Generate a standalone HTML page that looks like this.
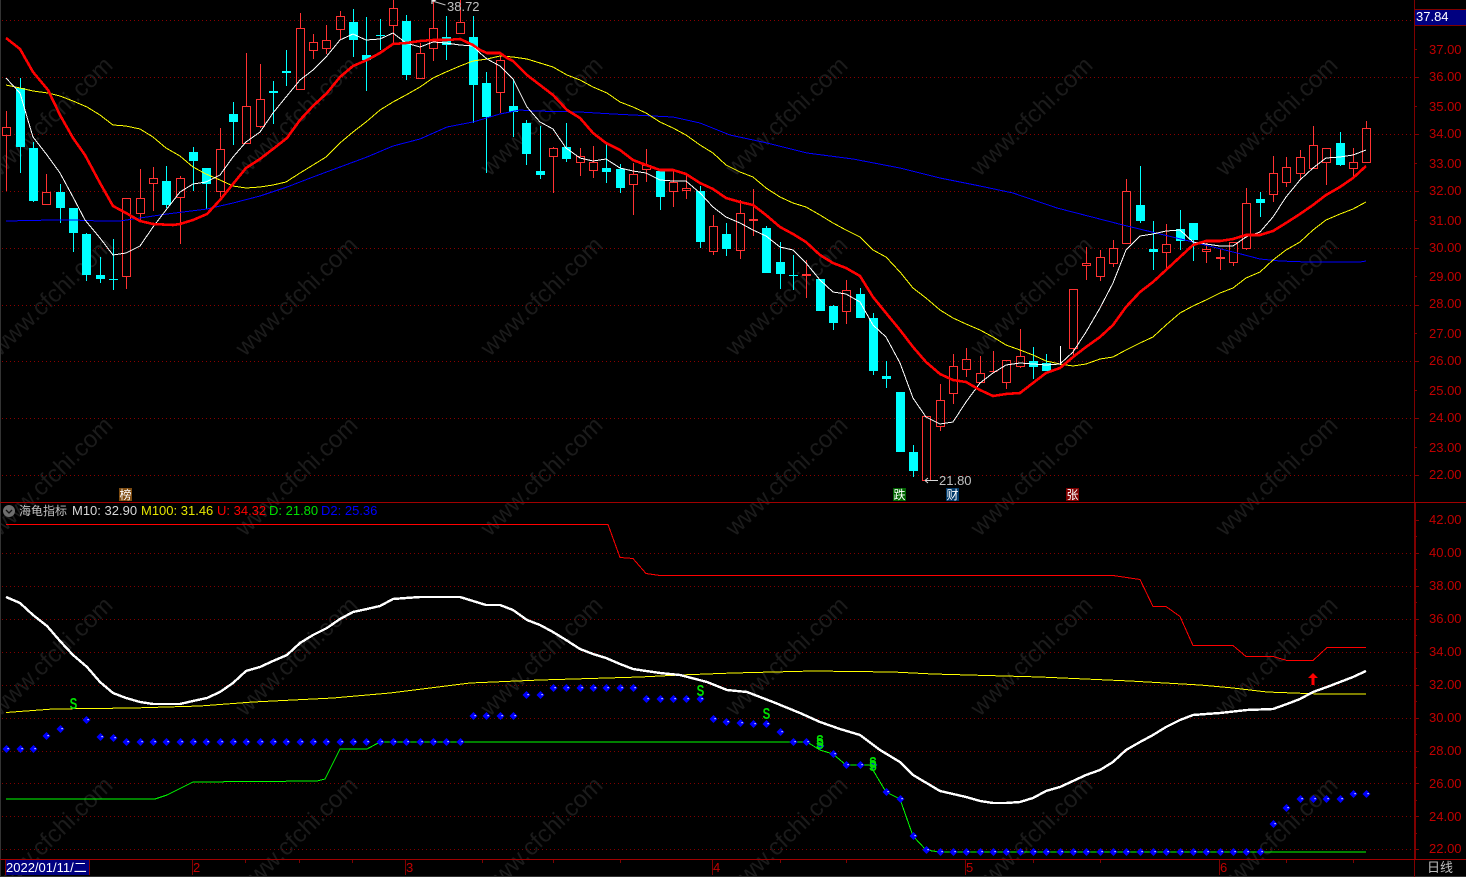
<!DOCTYPE html>
<html><head><meta charset="utf-8"><title>海龟指标</title>
<style>
html,body{margin:0;padding:0;background:#000;width:1466px;height:877px;overflow:hidden}
svg{display:block}
text{font-family:"Liberation Sans","Noto Sans CJK SC",sans-serif;font-size:13px}
.ax text{fill:#c00000}
.wm text{fill:#1b1b1b;font-size:24px;text-anchor:middle}
.tag{fill:#fff;font-size:12px;text-anchor:middle}
.s{fill:#00e000;font-size:16px;font-weight:bold;text-anchor:middle}
</style></head><body>
<svg width="1466" height="877" viewBox="0 0 1466 877" xmlns="http://www.w3.org/2000/svg">
<defs><g id="d"><path d="M0-4l4 4-4 4-4-4z" fill="#0000ff"/><path d="M1-1h1.2v1.2h-1.2z" fill="#fff"/></g></defs>
<rect width="1466" height="877" fill="#000"/>
<g class="wm">
<text transform="translate(57 122) rotate(-44)">www.cfchi.com</text><text transform="translate(302 122) rotate(-44)">www.cfchi.com</text><text transform="translate(547 122) rotate(-44)">www.cfchi.com</text><text transform="translate(792 122) rotate(-44)">www.cfchi.com</text><text transform="translate(1037 122) rotate(-44)">www.cfchi.com</text><text transform="translate(1282 122) rotate(-44)">www.cfchi.com</text>
<text transform="translate(57 302) rotate(-44)">www.cfchi.com</text><text transform="translate(302 302) rotate(-44)">www.cfchi.com</text><text transform="translate(547 302) rotate(-44)">www.cfchi.com</text><text transform="translate(792 302) rotate(-44)">www.cfchi.com</text><text transform="translate(1037 302) rotate(-44)">www.cfchi.com</text><text transform="translate(1282 302) rotate(-44)">www.cfchi.com</text>
<text transform="translate(57 482) rotate(-44)">www.cfchi.com</text><text transform="translate(302 482) rotate(-44)">www.cfchi.com</text><text transform="translate(547 482) rotate(-44)">www.cfchi.com</text><text transform="translate(792 482) rotate(-44)">www.cfchi.com</text><text transform="translate(1037 482) rotate(-44)">www.cfchi.com</text><text transform="translate(1282 482) rotate(-44)">www.cfchi.com</text>
<text transform="translate(57 662) rotate(-44)">www.cfchi.com</text><text transform="translate(302 662) rotate(-44)">www.cfchi.com</text><text transform="translate(547 662) rotate(-44)">www.cfchi.com</text><text transform="translate(792 662) rotate(-44)">www.cfchi.com</text><text transform="translate(1037 662) rotate(-44)">www.cfchi.com</text><text transform="translate(1282 662) rotate(-44)">www.cfchi.com</text>
<text transform="translate(57 842) rotate(-44)">www.cfchi.com</text><text transform="translate(302 842) rotate(-44)">www.cfchi.com</text><text transform="translate(547 842) rotate(-44)">www.cfchi.com</text><text transform="translate(792 842) rotate(-44)">www.cfchi.com</text><text transform="translate(1037 842) rotate(-44)">www.cfchi.com</text><text transform="translate(1282 842) rotate(-44)">www.cfchi.com</text>
</g>
<g shape-rendering="crispEdges" fill="none">
<path stroke="#8a0000" stroke-dasharray="1 3" d="M2 20.5H1414M2 77.5H1414M2 134.5H1414M2 191.5H1414M2 248.5H1414M2 305.5H1414M2 361.5H1414M2 418.5H1414M2 475.5H1414"/>
<path stroke="#800000" stroke-dasharray="1 3" d="M2 553.5H1414M2 586.5H1414M2 619.5H1414M2 652.5H1414M2 685.5H1414M2 718.5H1414M2 751.5H1414M2 783.5H1414M2 816.5H1414M2 849.5H1414"/>
<rect x="0" y="0" width="1" height="877" fill="#333"/>
<path stroke="#333" d="M0 876.5H1466"/>
<path stroke="#800000" d="M1414.5 0V877"/>
<path stroke="#a00000" d="M0 502.5H1466M0 859.5H1466"/>
<path stroke="#800000" d="M1415.5 503V859"/>
<path stroke="#800000" d="M1414 20.5h5M1414 49.5h3M1414 77.5h5M1414 106.5h3M1414 134.5h5M1414 163.5h3M1414 191.5h5M1414 220.5h3M1414 248.5h5M1414 276.5h3M1414 305.5h5M1414 333.5h3M1414 361.5h5M1414 390.5h3M1414 418.5h5M1414 447.5h3M1414 475.5h5"/>
<path stroke="#800000" d="M1414 520.5h5M1414 536.5h3M1414 553.5h5M1414 569.5h3M1414 586.5h5M1414 602.5h3M1414 619.5h5M1414 635.5h3M1414 652.5h5M1414 668.5h3M1414 685.5h5M1414 701.5h3M1414 718.5h5M1414 734.5h3M1414 751.5h5M1414 767.5h3M1414 783.5h5M1414 800.5h3M1414 816.5h5M1414 833.5h3M1414 849.5h5"/>
<path stroke="#800000" d="M192.500 860v15M405.500 860v15M712.500 860v15M965.500 860v15M1219.500 860v15M5.500 860v15M89.500 860v15M245.500 860v3M299.500 860v3M352.500 860v3M482.500 860v3M553.500 860v3M620.500 860v3M780.500 860v3M846.500 860v3M1033.500 860v3M1100.500 860v3M1286.500 860v3M1353.500 860v3"/>
</g>
<g shape-rendering="crispEdges">
<path fill="none" stroke="#00ffff" d="M20.5 78V173M33.5 142V202M60.5 184V223M73.5 208V252M86.5 233V281M100.5 257V283M113.5 239V290M166.5 166V208M193.5 147V191M206.5 168V209M233.5 102V145M273.5 81V124M286.5 50V86M353.5 9V57M366.5 17V91M380.5 19V50M406.5 15V80M446.5 16V60M473.5 16V123M486.5 72V173M513.5 79V137M526.5 120V165M540.5 126V179M566.5 123V162M606.5 143V183M620.5 164V193M660.5 171V210M700.5 186V248M726.5 223V256M766.5 226V273M780.5 242V289M793.5 255V290M833.5 305V330M860.5 288V318M873.5 313V375M886.5 361V388M913.5 445V477M1033.5 347V379M1046.5 354V371M1140.5 166V223M1153.5 221V270M1180.5 210V250M1193.5 223V261M1260.5 192V217M1340.5 132V166"/>
<path fill="#00ffff" d="M16 88h9v59h-9zM29 148h9v53h-9zM56 192h9v16h-9zM69 208h9v25h-9zM82 234h9v41h-9zM96 275h9v4h-9zM109 279h9v1h-9zM162 181h9v24h-9zM189 152h9v9h-9zM202 168h9v16h-9zM229 114h9v8h-9zM269 91h9v2h-9zM282 71h9v2h-9zM349 22h9v18h-9zM362 55h9v5h-9zM376 35h9v1h-9zM402 21h9v54h-9zM442 37h9v8h-9zM469 37h9v48h-9zM482 83h9v34h-9zM509 106h9v6h-9zM522 123h9v31h-9zM536 171h9v4h-9zM562 147h9v12h-9zM602 168h9v4h-9zM616 169h9v19h-9zM656 171h9v26h-9zM696 191h9v51h-9zM722 234h9v15h-9zM762 228h9v45h-9zM776 262h9v12h-9zM789 275h9v1h-9zM816 279h9v32h-9zM829 306h9v17h-9zM856 294h9v24h-9zM869 318h9v53h-9zM882 376h9v3h-9zM896 392h9v60h-9zM909 452h9v19h-9zM1029 361h9v6h-9zM1042 363h9v8h-9zM1136 205h9v16h-9zM1149 249h9v3h-9zM1176 229h9v12h-9zM1189 223h9v17h-9zM1256 199h9v4h-9zM1336 143h9v22h-9z"/>
<path fill="none" stroke="#ff3232" d="M6.5 111V127M6.5 135V191M46.5 174V192M46.5 204V205M126.5 276V289M140.5 169V198M140.5 213V220M153.5 167V178M153.5 183V211M180.5 176V178M180.5 197V244M220.5 128V149M220.5 191V197M246.5 53V106M260.5 64V99M260.5 126V128M300.5 13V28M300.5 89V90M313.5 34V42M313.5 50V59M326.5 25V40M326.5 48V54M340.5 11V16M340.5 29V40M393.5 0V8M393.5 25V43M420.5 43V53M433.5 0V28M433.5 48V61M460.5 0V22M500.5 56V60M500.5 92V113M553.5 147V148M553.5 156V193M580.5 148V156M580.5 162V176M593.5 146V162M593.5 170V178M633.5 163V174M633.5 184V215M646.5 149V165M646.5 169V182M673.5 171V182M673.5 191V207M686.5 174V188M686.5 190V199M713.5 215V226M713.5 251V255M740.5 200V213M740.5 250V259M753.5 189V236M806.5 260V298M846.5 280V290M846.5 311V324M940.5 384V400M940.5 426V431M953.5 354V366M953.5 393V404M966.5 348V359M966.5 369V377M980.5 356V373M993.5 351V373M1006.5 382V389M1020.5 329V356M1020.5 366V368M1073.5 348V355M1086.5 247V263M1086.5 265V280M1100.5 250V257M1100.5 276V281M1113.5 240V248M1113.5 263V267M1126.5 179V191M1166.5 224V244M1166.5 252V268M1206.5 243V249M1206.5 251V263M1220.5 249V270M1233.5 262V266M1246.5 188V203M1246.5 248V250M1273.5 156V173M1273.5 194V202M1286.5 157V167M1286.5 182V187M1300.5 150V157M1300.5 173V179M1313.5 126V145M1326.5 162V185M1353.5 148V162M1353.5 168V177M1366.5 121V128"/>
<path fill="none" stroke="#ff3232" d="M2.5 127.5h8v8h-8zM42.5 192.5h8v12h-8zM122.5 198.5h8v78h-8zM136.5 198.5h8v15h-8zM149.5 178.5h8v5h-8zM176.5 178.5h8v19h-8zM216.5 149.5h8v42h-8zM242.5 106.5h8v37h-8zM256.5 99.5h8v27h-8zM296.5 28.5h8v61h-8zM309.5 42.5h8v8h-8zM322.5 40.5h8v8h-8zM336.5 16.5h8v13h-8zM389.5 8.5h8v17h-8zM416.5 53.5h8v25h-8zM429.5 28.5h8v20h-8zM456.5 22.5h8v11h-8zM496.5 60.5h8v32h-8zM549.5 148.5h8v8h-8zM576.5 156.5h8v6h-8zM589.5 162.5h8v8h-8zM629.5 174.5h8v10h-8zM642.5 165.5h8v4h-8zM669.5 182.5h8v9h-8zM682.5 188.5h8v2h-8zM709.5 226.5h8v25h-8zM736.5 213.5h8v37h-8zM749.5 219.5h8v1h-8zM802.5 274.5h8v1h-8zM842.5 290.5h8v21h-8zM922.5 416.5h8v64h-8zM936.5 400.5h8v26h-8zM949.5 366.5h8v27h-8zM962.5 359.5h8v10h-8zM976.5 373.5h8v9h-8zM989.5 371.5h8M1002.5 360.5h8v22h-8zM1016.5 356.5h8v10h-8zM1069.5 289.5h8v59h-8zM1082.5 263.5h8v2h-8zM1096.5 257.5h8v19h-8zM1109.5 248.5h8v15h-8zM1122.5 191.5h8v52h-8zM1162.5 244.5h8v8h-8zM1202.5 249.5h8v2h-8zM1216.5 257.5h8v1h-8zM1229.5 242.5h8v20h-8zM1242.5 203.5h8v45h-8zM1269.5 173.5h8v21h-8zM1282.5 167.5h8v15h-8zM1296.5 157.5h8v16h-8zM1309.5 145.5h8v23h-8zM1322.5 148.5h8v14h-8zM1349.5 162.5h8v6h-8zM1362.5 128.5h8v34h-8z"/>
<path fill="none" stroke="#fff" d="M1060.5 346V365"/>
</g>
<g fill="none" stroke-linejoin="round" shape-rendering="crispEdges">
<polyline stroke="#0000ff" stroke-width="1" points="6,221 53,220 73,220 100,221 120,221 140,218 167,214 207,209 233,203 260,196 287,187 313,177 340,167 367,157 393,146 420,139 447,127 473,122 490,117 500,114 520,110 533,111 580,112 613,114 673,117 700,123 730,135 767,143 807,153 853,159 900,168 940,178 980,186 1013,193 1057,208 1123,225 1193,242 1237,253 1260,259 1280,261 1307,262 1360,262 1366,261"/>
<polyline stroke="#ffff00" stroke-width="1" points="6,85 20,88 33,91 48,93 60,96 73,101 87,107 100,115 113,125 126,126 140,129 153,137 166,148 180,156 193,167 206,174 220,180 233,186 246,188 260,187 273,185 286,182 300,173 313,165 326,157 340,143 353,132 366,122 380,110 393,102 406,95 420,87 433,78 446,72 460,66 473,61 487,59 500,56 513,57 527,59 540,63 553,67 567,75 580,80 593,87 607,93 620,102 633,107 646,113 660,122 673,128 686,135 700,145 713,153 726,165 740,172 753,177 766,188 780,197 793,203 806,207 820,215 833,223 846,230 860,237 873,250 886,257 900,272 913,288 926,298 940,310 953,318 966,324 980,330 993,337 1006,345 1020,350 1033,355 1046,361 1060,364 1073,366 1086,364 1100,359 1113,357 1126,350 1140,343 1153,337 1166,325 1180,313 1193,306 1206,300 1220,293 1233,288 1246,278 1260,272 1273,260 1286,250 1300,242 1313,230 1326,220 1340,214 1353,209 1366,202"/>
<polyline stroke="#ffffff" stroke-width="1" points="6,78 20,93 27,117 33,137 47,155 60,173 73,197 85,220 100,238 113,255 126,253 140,246 153,227 166,210 180,192 193,184 206,182 220,175 233,157 246,142 260,132 273,113 286,97 300,80 313,70 326,57 340,40 353,34 366,40 380,39 393,33 406,43 420,47 433,42 446,43 460,45 473,46 480,53 487,59 500,66 507,73 513,79 520,93 527,107 540,122 553,129 566,148 580,158 593,161 606,159 620,168 633,171 646,173 660,180 673,181 686,181 700,193 713,207 726,217 740,223 753,230 766,236 780,247 793,250 806,263 820,280 833,292 846,294 860,302 873,325 886,337 900,363 913,398 926,417 940,424 953,422 966,402 980,383 993,373 1006,365 1020,363 1033,364 1046,365 1060,364 1073,352 1086,332 1100,308 1113,283 1126,250 1140,236 1153,234 1166,231 1180,230 1193,242 1206,244 1220,246 1233,246 1246,237 1260,232 1273,217 1286,197 1300,180 1313,168 1326,158 1340,157 1353,155 1366,150"/>
<polyline stroke="#ff0000" stroke-width="2.6" points="6,38 20,49 33,72 48,90 60,115 73,138 85,155 100,183 113,206 126,213 140,221 153,224 173,225 180,224 193,220 207,214 220,200 233,184 246,168 260,159 273,149 287,138 300,120 313,106 327,93 340,77 353,66 367,60 380,53 393,44 406,43 420,41 433,40 447,40 460,39 473,45 480,50 487,53 500,53 507,58 513,61 520,68 527,75 540,85 553,95 567,110 580,118 593,133 606,143 620,150 633,160 646,165 660,170 673,170 686,174 700,183 713,189 726,198 740,202 753,205 766,215 780,227 793,234 806,242 820,255 833,263 846,268 860,276 873,297 886,313 900,330 913,347 926,362 940,374 953,380 966,382 980,390 993,396 1006,394 1020,393 1033,383 1046,373 1060,368 1073,357 1086,347 1100,337 1113,325 1126,307 1140,292 1153,282 1166,270 1180,257 1193,245 1206,241 1220,241 1233,239 1246,235 1260,235 1273,231 1286,223 1300,214 1313,205 1326,195 1340,187 1353,178 1366,166"/>
</g>
<path d="M432.5 1l13 4" stroke="#c0c0c0" fill="none"/><path d="M432 0v4M432 1l4 -1" stroke="#fff" fill="none"/>
<text x="447" y="11" fill="#c0c0c0">38.72</text>
<path d="M925 480.5h13M925 480.5l3-2.5M925 480.5l3 2.5" stroke="#d8d8d8" fill="none"/>
<text x="939" y="485" fill="#c0c0c0">21.80</text>
<rect x="119" y="488" width="13" height="13" fill="#7d4a0f"/><text class="tag" x="125.5" y="499">榜</text>
<rect x="893" y="488" width="13" height="13" fill="#006400"/><text class="tag" x="899.5" y="499">跌</text>
<rect x="946" y="488" width="13" height="13" fill="#003a6b"/><text class="tag" x="952.5" y="499">财</text>
<rect x="1066" y="488" width="13" height="13" fill="#800000"/><text class="tag" x="1072.5" y="499">张</text>
<circle cx="9" cy="511" r="6" fill="#6e6e6e"/><path d="M6 510l3 3 3-3" stroke="#111" stroke-width="1.3" fill="none"/>
<text x="19" y="515" fill="#c0c0c0" style="font-size:12px">海龟指标</text>
<text x="72" y="515" fill="#d8d8d8">M10: 32.90</text>
<text x="141" y="515" fill="#e6e600">M100: 31.46</text>
<text x="217" y="515" fill="#ff0000">U: 34.32</text>
<text x="269" y="515" fill="#00e000">D: 21.80</text>
<text x="321" y="515" fill="#0000ff">D2: 25.36</text>
<g fill="none" stroke-linejoin="round" shape-rendering="crispEdges">
<polyline stroke="#ff0000" points="6,524.5 608,524.5 620,557.5 633,558.5 646,573.5 660,575.5 1100,575.5 1113,575.5 1140,579.5 1153,606.5 1166,606.5 1180,616.5 1193,645.5 1233,645.5 1246,656.5 1273,656.5 1287,660.5 1313,660.5 1327,647.5 1366,647.5"/>
<polyline stroke="#ffff00" points="6,712.5 53,709 133,708 200,706 253,702 333,698 390,693 470,683 540,680 640,677 680,675 733,673 813,671 893,672 933,674 1040,677 1130,681 1200,685 1233,688 1267,692 1320,694 1366,694"/>
<polyline stroke="#00ff00" stroke-width="1" points="6,799 155,799 167,795 193,782 317,781 325,779 340,749 367,749 380,742 807,742 820,750 833,754 846,765 870,765 886,792 900,799 913,836 926,850 940,852 1366,852"/>
<polyline stroke="#ffffff" stroke-width="2.4" points="6,597 20,603 33,615 47,626 60,641 73,655 87,667 100,682 113,693 126,698 140,702 153,704 180,704 193,701 207,698 220,692 233,683 246,671 260,667 273,661 287,655 300,643 313,635 327,628 340,619 353,612 367,609 380,606 393,599 406,598 420,597 460,597 473,601 486,605 500,605 513,610 527,620 540,625 553,632 566,640 580,649 593,654 606,658 620,664 633,669 646,671 660,673 680,675 707,682 727,690 747,692 773,702 800,713 820,722 840,729 860,735 880,750 900,762 913,775 940,791 953,794 966,797 980,801 993,803 1006,803 1020,802 1033,798 1046,791 1060,787 1073,781 1086,775 1100,770 1113,762 1126,750 1140,742 1153,735 1166,727 1180,720 1193,715 1206,714 1220,713 1247,710 1273,709 1287,704 1300,699 1313,692 1327,687 1340,682 1353,677 1366,671"/>
</g>
<g>
<use href="#d" x="6.5" y="749"/><use href="#d" x="20.5" y="749"/><use href="#d" x="33.5" y="749"/><use href="#d" x="46.5" y="736"/><use href="#d" x="60.5" y="729"/><use href="#d" x="86.5" y="720"/><use href="#d" x="100.5" y="737"/><use href="#d" x="113.5" y="738"/>
<use href="#d" x="126.5" y="742"/><use href="#d" x="140.5" y="742"/><use href="#d" x="153.5" y="742"/><use href="#d" x="166.5" y="742"/><use href="#d" x="180.5" y="742"/><use href="#d" x="193.5" y="742"/><use href="#d" x="206.5" y="742"/><use href="#d" x="220.5" y="742"/><use href="#d" x="233.5" y="742"/><use href="#d" x="246.5" y="742"/><use href="#d" x="260.5" y="742"/><use href="#d" x="273.5" y="742"/><use href="#d" x="286.5" y="742"/><use href="#d" x="300.5" y="742"/><use href="#d" x="313.5" y="742"/><use href="#d" x="326.5" y="742"/><use href="#d" x="340.5" y="742"/><use href="#d" x="353.5" y="742"/><use href="#d" x="366.5" y="742"/><use href="#d" x="380.5" y="742"/><use href="#d" x="393.5" y="742"/><use href="#d" x="406.5" y="742"/><use href="#d" x="420.5" y="742"/><use href="#d" x="433.5" y="742"/><use href="#d" x="446.5" y="742"/><use href="#d" x="460.5" y="742"/>
<use href="#d" x="473.5" y="716"/><use href="#d" x="486.5" y="716"/><use href="#d" x="500.5" y="716"/><use href="#d" x="513.5" y="716"/><use href="#d" x="526.5" y="695"/><use href="#d" x="540.5" y="695"/>
<use href="#d" x="553.5" y="688"/><use href="#d" x="566.5" y="688"/><use href="#d" x="580.5" y="688"/><use href="#d" x="593.5" y="688"/><use href="#d" x="606.5" y="688"/><use href="#d" x="620.5" y="688"/><use href="#d" x="633.5" y="688"/>
<use href="#d" x="646.5" y="699"/><use href="#d" x="660.5" y="699"/><use href="#d" x="673.5" y="699"/><use href="#d" x="686.5" y="699"/><use href="#d" x="700.5" y="699"/>
<use href="#d" x="713.5" y="719"/><use href="#d" x="726.5" y="722"/><use href="#d" x="740.5" y="723"/><use href="#d" x="753.5" y="724"/><use href="#d" x="766.5" y="724"/><use href="#d" x="780.5" y="732"/><use href="#d" x="793.5" y="742"/><use href="#d" x="806.5" y="742"/><use href="#d" x="820.5" y="746"/><use href="#d" x="833.5" y="754"/><use href="#d" x="846.5" y="765"/><use href="#d" x="860.5" y="765"/><use href="#d" x="873.5" y="765"/><use href="#d" x="886.5" y="792"/><use href="#d" x="900.5" y="799"/><use href="#d" x="913.5" y="836"/><use href="#d" x="926.5" y="850"/>
<use href="#d" x="940.5" y="852"/><use href="#d" x="953.5" y="852"/><use href="#d" x="966.5" y="852"/><use href="#d" x="980.5" y="852"/><use href="#d" x="993.5" y="852"/><use href="#d" x="1006.5" y="852"/><use href="#d" x="1020.5" y="852"/><use href="#d" x="1033.5" y="852"/><use href="#d" x="1046.5" y="852"/><use href="#d" x="1060.5" y="852"/><use href="#d" x="1073.5" y="852"/><use href="#d" x="1086.5" y="852"/><use href="#d" x="1100.5" y="852"/><use href="#d" x="1113.5" y="852"/><use href="#d" x="1126.5" y="852"/><use href="#d" x="1140.5" y="852"/><use href="#d" x="1153.5" y="852"/><use href="#d" x="1166.5" y="852"/><use href="#d" x="1180.5" y="852"/><use href="#d" x="1193.5" y="852"/><use href="#d" x="1206.5" y="852"/><use href="#d" x="1220.5" y="852"/><use href="#d" x="1233.5" y="852"/><use href="#d" x="1246.5" y="852"/><use href="#d" x="1260.5" y="852"/>
<use href="#d" x="1273.5" y="824"/><use href="#d" x="1286.5" y="808"/><use href="#d" x="1300.5" y="799"/><use href="#d" x="1313.5" y="799"/><use href="#d" x="1326.5" y="799"/><use href="#d" x="1340.5" y="799"/><use href="#d" x="1353.5" y="794"/><use href="#d" x="1366.5" y="794"/>
</g>
<text class="s" transform="translate(73.5 709) scale(.72 1)">S</text>
<text class="s" transform="translate(700.5 696) scale(.72 1)">S</text>
<text class="s" transform="translate(766.5 719) scale(.72 1)">S</text>
<text class="s" transform="translate(820 746) scale(.72 1)">S</text>
<text class="s" transform="translate(820 749) scale(.72 1)">S</text>
<text class="s" transform="translate(873 768) scale(.72 1)">S</text>
<text class="s" transform="translate(873 771) scale(.72 1)">S</text>
<path d="M1313 673l5 5h-3.500v7h-3v-7h-3.500z" fill="#ff0000"/>
<rect x="1415" y="9" width="51" height="16" fill="#000080"/>
<path d="M1415 9.500H1466M1415 25.500H1466" stroke="#800000" fill="none"/>
<text x="1416" y="21" fill="#fff">37.84</text>
<g class="ax">
<text x="1429" y="54">37.00</text><text x="1429" y="81">36.00</text><text x="1429" y="111">35.00</text><text x="1429" y="138">34.00</text><text x="1429" y="168">33.00</text><text x="1429" y="195">32.00</text><text x="1429" y="225">31.00</text><text x="1429" y="252">30.00</text><text x="1429" y="281">29.00</text><text x="1429" y="308">28.00</text><text x="1429" y="338">27.00</text><text x="1429" y="365">26.00</text><text x="1429" y="395">25.00</text><text x="1429" y="422">24.00</text><text x="1429" y="452">23.00</text><text x="1429" y="479">22.00</text>
<text x="1429" y="524">42.00</text><text x="1429" y="557">40.00</text><text x="1429" y="590">38.00</text><text x="1429" y="623">36.00</text><text x="1429" y="656">34.00</text><text x="1429" y="689">32.00</text><text x="1429" y="722">30.00</text><text x="1429" y="755">28.00</text><text x="1429" y="788">26.00</text><text x="1429" y="821">24.00</text><text x="1429" y="853">22.00</text>
<text x="193" y="872">2</text><text x="406" y="872">3</text><text x="713" y="872">4</text><text x="966" y="872">5</text><text x="1220" y="872">6</text>
</g>
<rect x="6" y="860" width="83" height="15" fill="#000080"/>
<text x="6" y="872" fill="#fff">2022/01/11/二</text>
<text x="1427" y="872" fill="#c0c0c0">日线</text>
</svg>
</body></html>
